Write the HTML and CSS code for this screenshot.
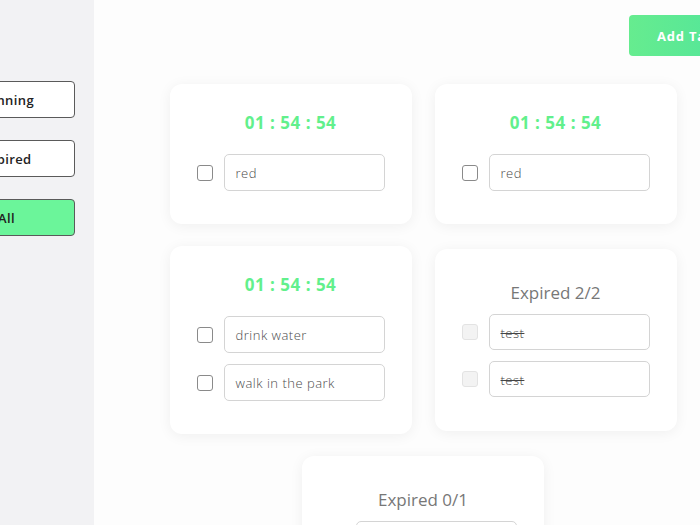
FILE: index.html
```html
<!DOCTYPE html>
<html>
<head>
<meta charset="utf-8">
<link rel="stylesheet" href="styles.css">
</head>
<body>
<div class="app">
  <aside class="sidebar">
    <button class="filter">Running</button>
    <button class="filter">Expired</button>
    <button class="filter active">All</button>
  </aside>
  <main class="main">
    <header class="topbar">
      <button class="add">Add Task</button>
    </header>
    <section class="cards">
      <div class="card">
        <div class="timer">01 : 54 : 54</div>
        <div class="task"><span class="check"></span><div class="field">red</div></div>
      </div>
      <div class="card">
        <div class="timer">01 : 54 : 54</div>
        <div class="task"><span class="check"></span><div class="field">red</div></div>
      </div>
      <div class="card">
        <div class="timer">01 : 54 : 54</div>
        <div class="task"><span class="check"></span><div class="field">drink water</div></div>
        <div class="task"><span class="check"></span><div class="field">walk in the park</div></div>
      </div>
      <div class="card expired">
        <div class="title">Expired 2/2</div>
        <div class="task"><span class="check"></span><div class="field done">test</div></div>
        <div class="task"><span class="check"></span><div class="field done">test</div></div>
      </div>
      <div class="card expired">
        <div class="title">Expired 0/1</div>
        <div class="task"><span class="check"></span><div class="field">water</div></div>
      </div>
    </section>
  </main>
</div>
</body>
</html>
```
FILE: styles.css
```css
html, body {
  margin: 0;
  padding: 0;
  overflow: hidden;
  background: #fdfdfd;
  font-family: "Open Sans", "Liberation Sans", sans-serif;
}
.app {
  display: flex;
  margin-left: -82px;
  width: 836px;
  min-height: 525px;
}
.sidebar {
  width: 176px;
  flex: none;
  background: #f2f2f4;
  padding: 81px 19px 0 20px;
  box-sizing: border-box;
  display: flex;
  flex-direction: column;
  gap: 22px;
}
.filter {
  width: 137px;
  height: 37px;
  border: 1px solid #5a5a5a;
  border-radius: 4px;
  background: #fff;
  font-family: inherit;
  font-size: 13px;
  font-weight: 600;
  letter-spacing: 0.4px;
  color: #222;
  padding: 1px 0 0;
}
.filter.active {
  background: #6bf59a;
}
.main {
  width: 658px;
  flex: none;
}
.topbar {
  display: flex;
  justify-content: flex-end;
  padding: 15px 2px 0 0;
}
.add {
  height: 41px;
  padding: 0 28px;
  border: none;
  border-radius: 4px;
  background: linear-gradient(90deg, #66ec8f, #4fe49c);
  color: #fff;
  font-family: inherit;
  font-size: 13px;
  font-weight: 700;
  letter-spacing: 0.8px;
}
.cards {
  display: flex;
  flex-wrap: wrap;
  justify-content: center;
  align-items: center;
  gap: 22px 23px;
  padding-top: 28px;
}
.card {
  width: 242px;
  box-sizing: border-box;
  background: #fff;
  border-radius: 12px;
  padding: 27px 27px 33px;
  box-shadow: 0 2px 14px rgba(0, 0, 0, 0.06);
  display: flex;
  flex-direction: column;
  gap: 11px;
}
.card.expired {
  padding: 32px 27px 34px;
}
.timer {
  text-align: center;
  line-height: 24px;
  font-size: 17px;
  font-weight: 700;
  letter-spacing: 0.5px;
  color: #62f08c;
  margin-bottom: 8px;
}
.title {
  text-align: center;
  line-height: 24px;
  font-size: 17px;
  color: #777;
  margin-bottom: -2px;
}
.task {
  display: flex;
  align-items: center;
  gap: 11px;
}
.check {
  width: 16px;
  height: 16px;
  box-sizing: border-box;
  border: 1.5px solid #8a8a8a;
  border-radius: 3px;
  background: #fff;
  flex: none;
}
.expired .check {
  background: #f3f3f3;
  border: 1px solid #e3e3e3;
}
.field {
  flex: 1;
  height: 37px;
  box-sizing: border-box;
  border: 1px solid #d4d4d4;
  border-radius: 5px;
  padding: 1px 0 0 11px;
  display: flex;
  align-items: center;
  font-size: 13px;
  font-weight: 300;
  letter-spacing: 0.5px;
  color: #4a4a4a;
  background: #fff;
}
.expired .field {
  height: 36px;
}
.field.done {
  text-decoration: line-through;
  color: #444;
}
```
